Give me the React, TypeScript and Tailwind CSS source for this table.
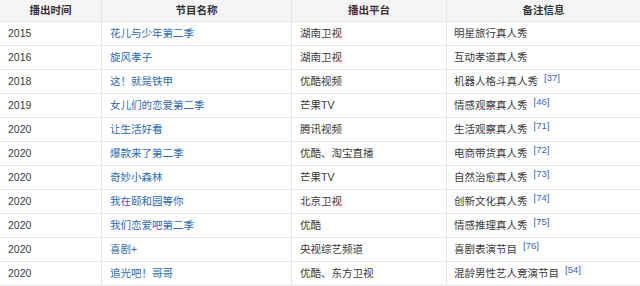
import React from 'react';

interface Show {
  year: string;
  name: string;
  platform: string;
  note: string;
  ref?: string;
}

const shows: Show[] = [
  { year: '2015', name: '花儿与少年第二季', platform: '湖南卫视', note: '明星旅行真人秀' },
  { year: '2016', name: '旋风孝子', platform: '湖南卫视', note: '互动孝道真人秀' },
  { year: '2018', name: '这！就是铁甲', platform: '优酷视频', note: '机器人格斗真人秀', ref: '37' },
  { year: '2019', name: '女儿们的恋爱第二季', platform: '芒果TV', note: '情感观察真人秀', ref: '46' },
  { year: '2020', name: '让生活好看', platform: '腾讯视频', note: '生活观察真人秀', ref: '71' },
  { year: '2020', name: '爆款来了第二季', platform: '优酷、淘宝直播', note: '电商带货真人秀', ref: '72' },
  { year: '2020', name: '奇妙小森林', platform: '芒果TV', note: '自然治愈真人秀', ref: '73' },
  { year: '2020', name: '我在颐和园等你', platform: '北京卫视', note: '创新文化真人秀', ref: '74' },
  { year: '2020', name: '我们恋爱吧第二季', platform: '优酷', note: '情感推理真人秀', ref: '75' },
  { year: '2020', name: '喜剧+', platform: '央视综艺频道', note: '喜剧表演节目', ref: '76' },
  { year: '2020', name: '追光吧！哥哥', platform: '优酷、东方卫视', note: '混龄男性艺人竞演节目', ref: '54' },
];

const headers = ['播出时间', '节目名称', '播出平台', '备注信息'];

export default function App() {
  return (
    <div
      className="w-[640px] h-[286px] overflow-hidden bg-white text-[10.5px] text-[#3a3a3a]"
      style={{ fontFamily: '"Liberation Sans", "Noto Sans CJK SC", sans-serif' }}
    >
      <div className="grid grid-cols-[102px_190px_155px_1fr]">
        {headers.map((h, i) => (
          <div
            key={h}
            className={`h-[22px] flex items-center justify-center bg-[#f5f5f5] border-b border-[#e6e6e6] font-bold text-[#333] ${
              i < 3 ? 'border-r' : ''
            }`}
          >
            {h}
          </div>
        ))}
        {shows.map((s, idx) => (
          <React.Fragment key={idx}>
            <div className="h-[24px] flex items-center pl-[8px] border-b border-r border-[#e6e6e6]">{s.year}</div>
            <div className="h-[24px] flex items-center pl-[8px] border-b border-r border-[#e6e6e6] text-[#2a6ab8]">
              {s.name}
            </div>
            <div className="h-[24px] flex items-center pl-[8px] border-b border-r border-[#e6e6e6]">{s.platform}</div>
            <div className="h-[24px] flex items-center pl-[7px] border-b border-[#e6e6e6]">
              <span>{s.note}</span>
              {s.ref && (
                <span className="ml-[6px] text-[9.5px] leading-none text-[#3366cc] relative top-[-4px]">[{s.ref}]</span>
              )}
            </div>
          </React.Fragment>
        ))}
      </div>
    </div>
  );
}
